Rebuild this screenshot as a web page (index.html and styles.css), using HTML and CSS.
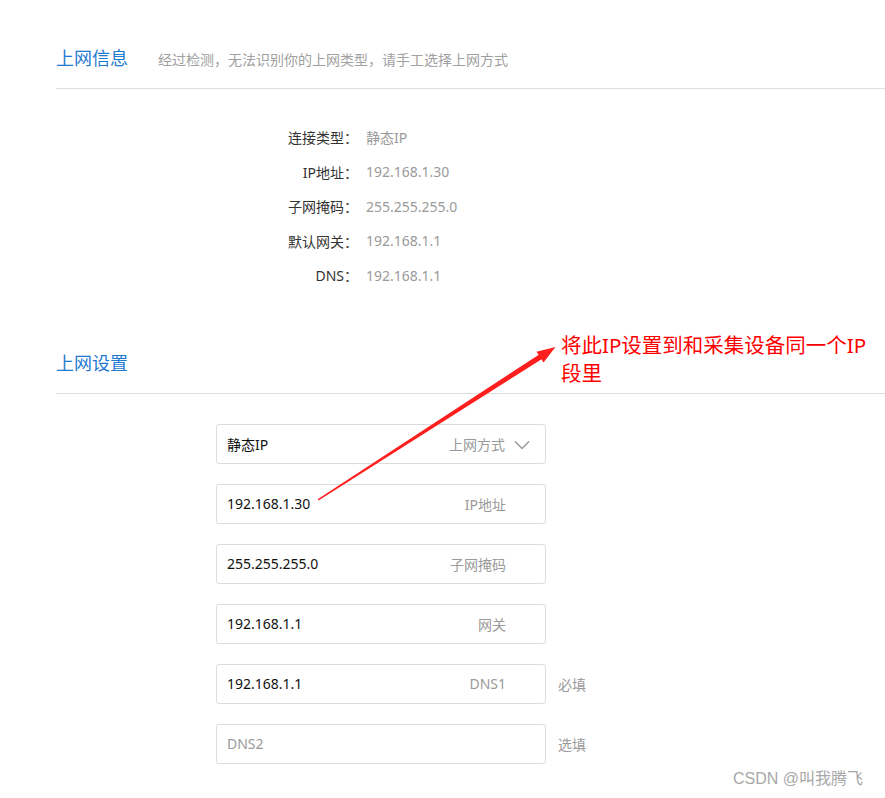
FILE: index.html
```html
<!DOCTYPE html>
<html lang="zh-CN">
<head>
<meta charset="utf-8">
<title>上网设置</title>
<link rel="stylesheet" href="styles.css">
</head>
<body>
<div class="page">
  <div class="section-head head-info">
    <h2 class="section-title">上网信息</h2>
    <span class="section-sub">经过检测，无法识别你的上网类型，请手工选择上网方式</span>
  </div>
  <div class="info-list">
    <div class="info-row"><span class="info-label">连接类型：</span><span class="info-value">静态IP</span></div>
    <div class="info-row"><span class="info-label">IP地址：</span><span class="info-value">192.168.1.30</span></div>
    <div class="info-row"><span class="info-label">子网掩码：</span><span class="info-value">255.255.255.0</span></div>
    <div class="info-row"><span class="info-label">默认网关：</span><span class="info-value">192.168.1.1</span></div>
    <div class="info-row"><span class="info-label">DNS：</span><span class="info-value">192.168.1.1</span></div>
  </div>
  <div class="section-head head-set">
    <h2 class="section-title">上网设置</h2>
  </div>
  <div class="form">
    <div class="form-row">
      <div class="field field-select">
        <span class="field-value">静态IP</span>
        <span class="field-label">上网方式</span>
        <svg class="chevron" width="16" height="10" viewBox="0 0 16 10"><path d="M1 1.5 L8 8.5 L15 1.5" fill="none" stroke="#9a9a9a" stroke-width="1.5"/></svg>
      </div>
    </div>
    <div class="form-row">
      <div class="field"><span class="field-value">192.168.1.30</span><span class="field-label">IP地址</span></div>
    </div>
    <div class="form-row">
      <div class="field"><span class="field-value">255.255.255.0</span><span class="field-label">子网掩码</span></div>
    </div>
    <div class="form-row">
      <div class="field"><span class="field-value">192.168.1.1</span><span class="field-label">网关</span></div>
    </div>
    <div class="form-row">
      <div class="field"><span class="field-value">192.168.1.1</span><span class="field-label">DNS1</span></div>
      <span class="field-note">必填</span>
    </div>
    <div class="form-row">
      <div class="field"><span class="field-placeholder">DNS2</span></div>
      <span class="field-note">选填</span>
    </div>
  </div>
</div>

<div class="annotation">将此IP设置到和采集设备同一个IP段里</div>
<svg class="arrow" width="885" height="798" viewBox="0 0 885 798">
  <polygon points="317.7,499.2 318.5,500.6 542.4,358.8 539.6,354.2" fill="#ff1e1e"/>
  <polygon points="555.5,347 536.5,351.8 543.5,362.5" fill="#ff1e1e"/>
</svg>
<div class="watermark">CSDN @叫我腾飞</div>
</body>
</html>
```

FILE: styles.css
```css
html, body {
  margin: 0;
  padding: 0;
  background: #fff;
}
body {
  width: 885px;
  height: 798px;
  overflow: hidden;
  position: relative;
  font-family: "Noto Sans", "Noto Sans CJK SC", sans-serif;
  font-size: 14px;
  color: #333;
}
.page {
  padding-left: 56px;
}
.section-head {
  display: flex;
  align-items: baseline;
  border-bottom: 1px solid #dedede;
  box-sizing: border-box;
}
.head-info {
  height: 89px;
  padding-top: 46px;
}
.head-set {
  height: 101px;
  padding-top: 58px;
}
.section-title {
  margin: 0;
  font-size: 18px;
  font-weight: normal;
  line-height: 24px;
  color: #1f7ad2;
}
.section-sub {
  margin-left: 30px;
  font-size: 14px;
  color: #a0a0a0;
}
.info-list {
  padding-top: 31px;
  padding-bottom: 0;
}
.info-row {
  display: flex;
  height: 34.5px;
  align-items: center;
}
.info-label {
  width: 302px;
  text-align: right;
  color: #333;
}
.info-value {
  margin-left: 8px;
  color: #9a9a9a;
}
.form {
  padding-top: 30px;
  padding-left: 160px;
  display: flex;
  flex-direction: column;
  gap: 20px;
}
.form-row {
  display: flex;
  align-items: center;
}
.field {
  width: 330px;
  height: 40px;
  box-sizing: border-box;
  border: 1px solid #dcdcdc;
  border-radius: 3px;
  display: flex;
  align-items: center;
  padding: 0 39px 0 10px;
}
.field-select {
  padding-right: 15px;
}
.field-value {
  color: #111;
  flex: 1;
}
.field-placeholder {
  color: #9a9a9a;
}
.field-label {
  color: #9a9a9a;
}
.chevron {
  margin-left: 9px;
  margin-top: 2px;
}
.field-note {
  margin-left: 12px;
  color: #9a9a9a;
}
.annotation {
  position: absolute;
  left: 561px;
  top: 331px;
  width: 310px;
  font-size: 20.5px;
  line-height: 28px;
  color: #ff0000;
}
.arrow {
  position: absolute;
  left: 0;
  top: 0;
  pointer-events: none;
}
.watermark {
  position: absolute;
  left: 733px;
  top: 768px;
  font-family: "Liberation Sans", "Noto Sans CJK SC", sans-serif;
  font-size: 16px;
  line-height: 22px;
  color: #a8a8a8;
}
```
